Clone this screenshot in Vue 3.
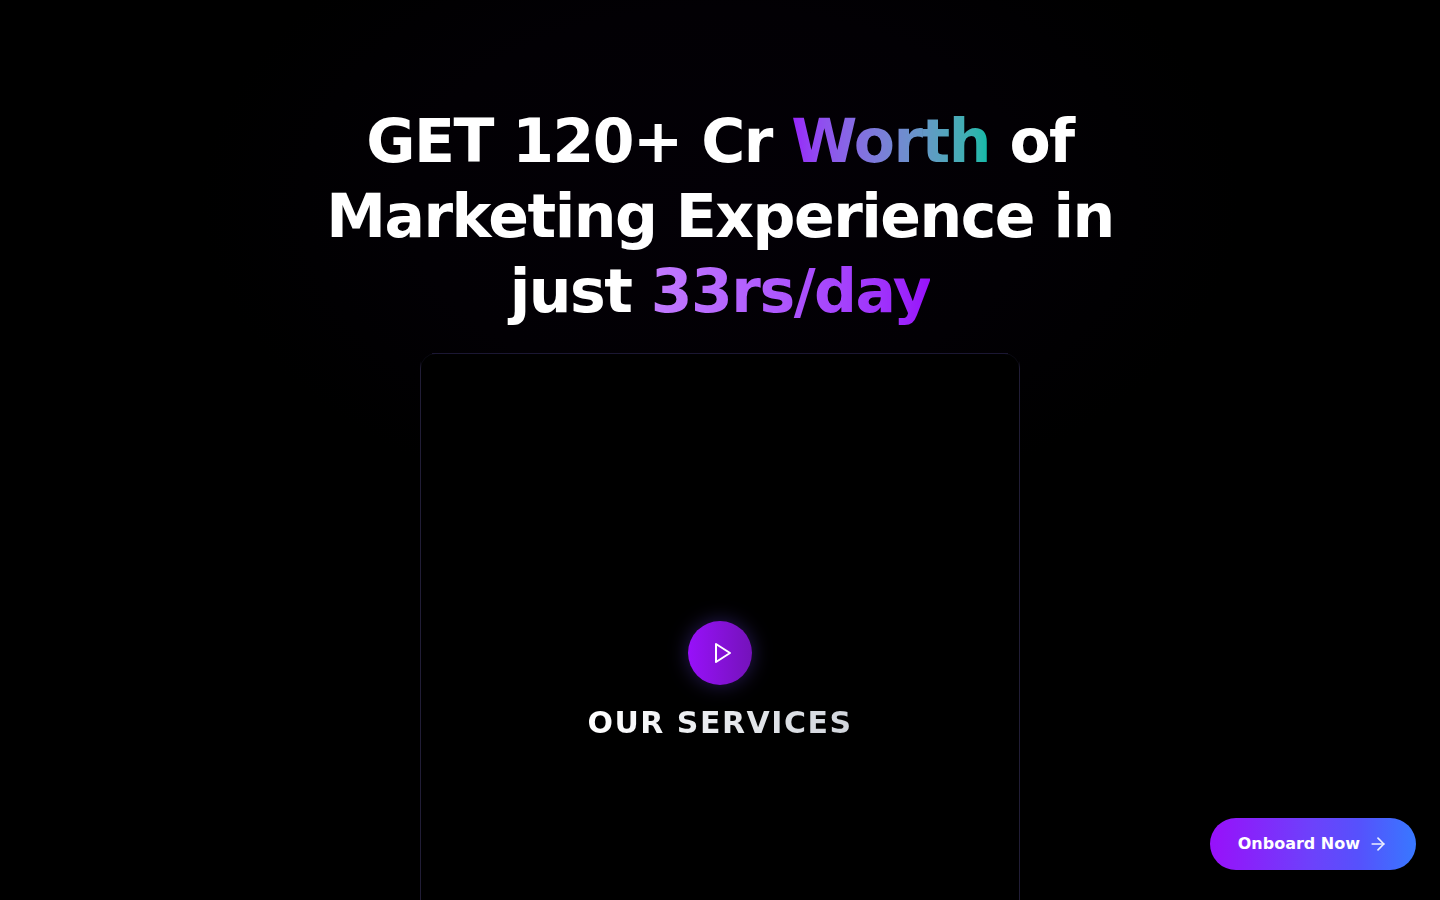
<script setup>
const services = 'OUR SERVICES'
</script>

<template>
  <main class="page">
    <section class="hero">
      <h1 class="title">
        GET 120+ Cr <span class="worth">Worth</span> of Marketing Experience in just
        <span class="price">33rs/day</span>
      </h1>
      <div class="card">
        <button class="play" type="button" aria-label="Play our services video">
          <svg width="24" height="24" viewBox="0 0 24 24" fill="none" stroke="currentColor" stroke-width="2" stroke-linecap="round" stroke-linejoin="round" aria-hidden="true">
            <polygon points="6 3 20 12 6 21 6 3" />
          </svg>
        </button>
        <h2 class="services">{{ services }}</h2>
      </div>
    </section>
    <button class="onboard" type="button">
      <span>Onboard Now</span>
      <svg width="20" height="20" viewBox="0 0 24 24" fill="none" stroke="currentColor" stroke-width="2" stroke-linecap="round" stroke-linejoin="round" aria-hidden="true">
        <path d="M5 12h14" />
        <path d="m12 5 7 7-7 7" />
      </svg>
    </button>
  </main>
</template>

<style>
body {
  margin: 0;
  background: #000;
}
</style>

<style scoped>
.page {
  height: 100vh;
  overflow: hidden;
  color: #fff;
  font-family: "DejaVu Sans", sans-serif;
  background: radial-gradient(ellipse 520px 320px at 50% 200px, #030006 0%, #020004 60%, #000 100%) #000;
}

.hero {
  display: flex;
  flex-direction: column;
  align-items: center;
  gap: 24px;
  padding: 104px 24px 0;
}

.title {
  max-width: 896px;
  margin: 0;
  font-size: 60px;
  line-height: 75px;
  font-weight: 700;
  letter-spacing: -1.5px;
  text-align: center;
}

.worth,
.price,
.services {
  color: transparent;
  background-clip: text;
  -webkit-background-clip: text;
}

.worth {
  background-image: linear-gradient(to right in oklab, #9820fa, #00bba7);
}

.price {
  background-image: linear-gradient(to right in oklab, #c27aff, #9810fa);
}

.card {
  position: relative;
  box-sizing: border-box;
  display: flex;
  flex-direction: column;
  align-items: center;
  justify-content: center;
  gap: 18px;
  width: 100%;
  max-width: 600px;
  min-height: 658px;
  border: 1px solid #0a0912;
  border-radius: 16px;
  background: #000;
}

/* Brighter straight edges that leave the rounded corners dim */
.card::before {
  content: "";
  position: absolute;
  inset: -1px;
  pointer-events: none;
  background:
    linear-gradient(#1b1733, #1b1733) center top / calc(100% - 24px) 1px no-repeat,
    linear-gradient(transparent 8px, #211d36 16px) left top / 1px 100% no-repeat,
    linear-gradient(transparent 8px, #211d36 16px) right top / 1px 100% no-repeat;
}

.play {
  display: flex;
  align-items: center;
  justify-content: center;
  width: 64px;
  height: 64px;
  padding: 0;
  border: 0;
  border-radius: 50%;
  color: #fff;
  background: linear-gradient(to right in oklab, #9810fa, #7412ba);
  box-shadow: 0 0 20px rgba(100, 70, 220, 0.4);
  cursor: pointer;
}

.play svg {
  margin-left: 4px;
}

.services {
  margin: 0;
  font-size: 30px;
  line-height: 40px;
  font-weight: 700;
  letter-spacing: 1.5px;
  background-image: linear-gradient(to right in oklab, #fff, #d1d5dc);
}

.onboard {
  position: fixed;
  right: 24px;
  bottom: 30px;
  display: flex;
  align-items: center;
  gap: 8px;
  height: 52px;
  padding: 0 28px;
  border: 0;
  border-radius: 26px;
  color: #fff;
  font: 700 16px/24px "DejaVu Sans", sans-serif;
  background: linear-gradient(to right, #9810fa, #6c42fb 50%, #5651fc 72%, #3878ff);
  cursor: pointer;
}

.onboard svg {
  opacity: 0.9;
}
</style>
